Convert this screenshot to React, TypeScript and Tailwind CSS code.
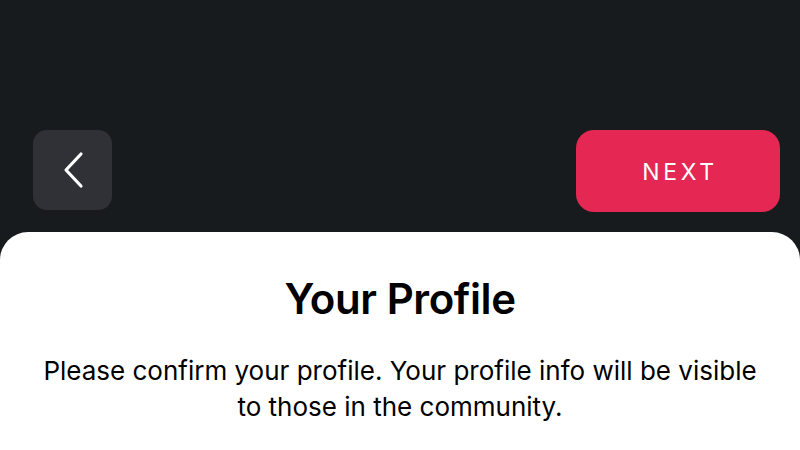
export default function App() {
  return (
    <div className="flex h-[450px] w-[800px] flex-col overflow-hidden bg-[#181b1e] font-['Inter',sans-serif]">
      <div className="flex h-[232px] shrink-0 items-start justify-between pl-[33px] pr-[20px] pt-[130px]">
        <button className="flex h-[80px] w-[79px] items-center justify-center rounded-[14px] bg-[#2f3137]">
          <svg width="22" height="38" viewBox="0 0 22 38" fill="none">
            <path
              d="M19 3 L4 19 L19 35"
              stroke="white"
              strokeWidth="3.2"
              strokeLinecap="round"
              strokeLinejoin="round"
            />
          </svg>
        </button>
        <button className="flex h-[82px] w-[204px] items-center justify-center rounded-[18px] bg-[#e52853] pl-[4px] pt-[2px] text-[23px] font-normal tracking-[0.16em] text-white">
          NEXT
        </button>
      </div>
      <div className="flex flex-1 flex-col items-center rounded-t-[28px] bg-white pt-[43px]">
        <h1 className="text-[42px] font-semibold leading-[48px] tracking-[-0.01em] text-black">
          Your Profile
        </h1>
        <p className="mt-[30px] w-[730px] text-center text-[26px] leading-[36px] text-black">
          Please confirm your profile. Your profile info will be visible to those in the community.
        </p>
      </div>
    </div>
  );
}
